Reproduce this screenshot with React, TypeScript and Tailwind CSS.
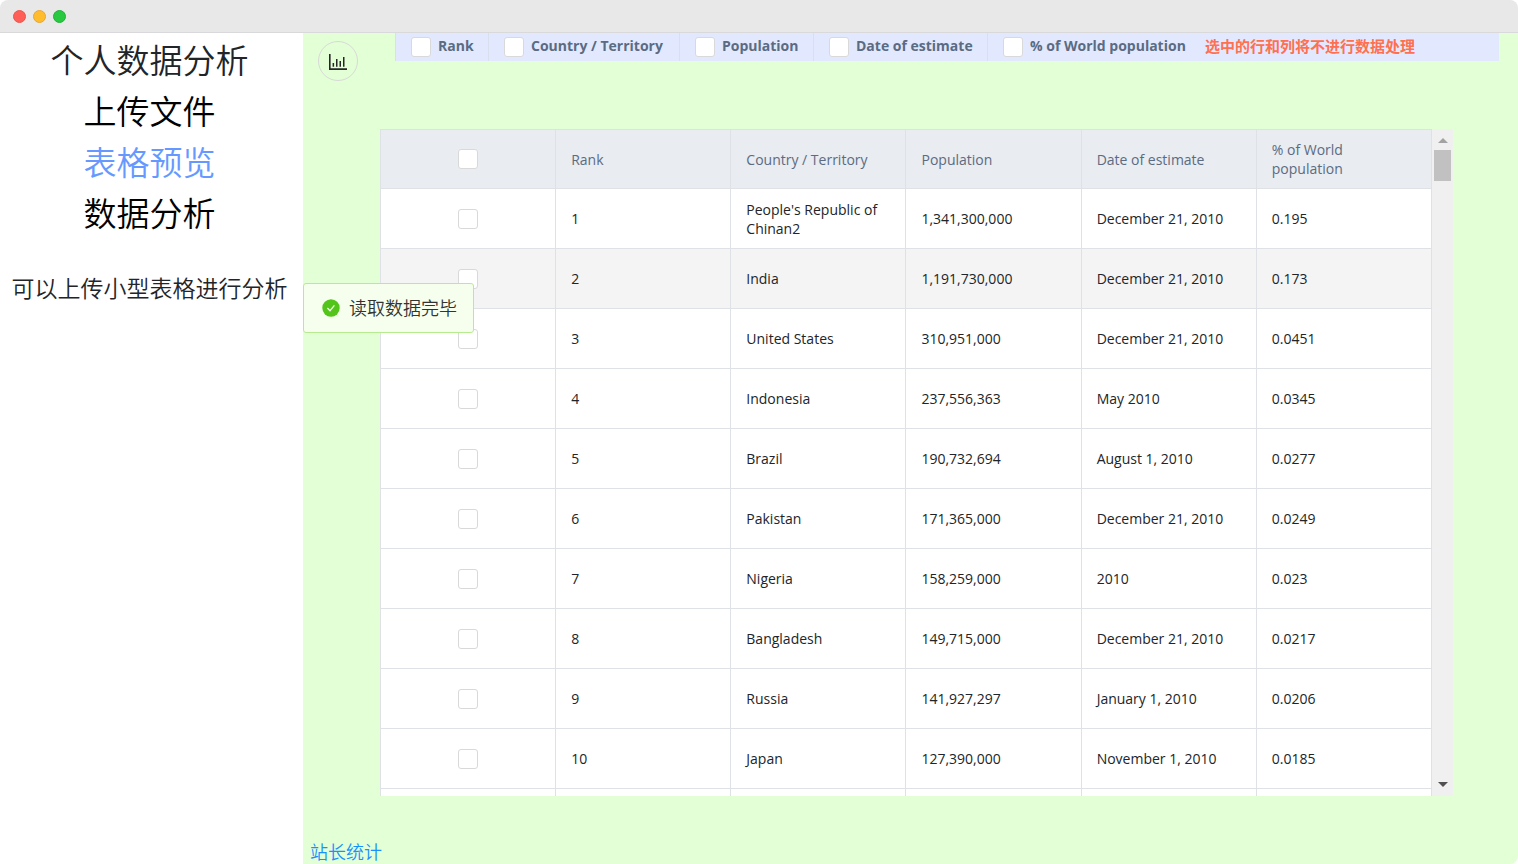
import { useState } from "react";

interface Row {
  rank: string;
  country: string;
  population: string;
  date: string;
  share: string;
}

const rows: Row[] = [
  { rank: "1", country: "People's Republic of Chinan2", population: "1,341,300,000", date: "December 21, 2010", share: "0.195" },
  { rank: "2", country: "India", population: "1,191,730,000", date: "December 21, 2010", share: "0.173" },
  { rank: "3", country: "United States", population: "310,951,000", date: "December 21, 2010", share: "0.0451" },
  { rank: "4", country: "Indonesia", population: "237,556,363", date: "May 2010", share: "0.0345" },
  { rank: "5", country: "Brazil", population: "190,732,694", date: "August 1, 2010", share: "0.0277" },
  { rank: "6", country: "Pakistan", population: "171,365,000", date: "December 21, 2010", share: "0.0249" },
  { rank: "7", country: "Nigeria", population: "158,259,000", date: "2010", share: "0.023" },
  { rank: "8", country: "Bangladesh", population: "149,715,000", date: "December 21, 2010", share: "0.0217" },
  { rank: "9", country: "Russia", population: "141,927,297", date: "January 1, 2010", share: "0.0206" },
  { rank: "10", country: "Japan", population: "127,390,000", date: "November 1, 2010", share: "0.0185" },
];

const columns = [
  { name: "Rank", width: "w-[93px]" },
  { name: "Country / Territory", width: "w-[191px]" },
  { name: "Population", width: "w-[134px]" },
  { name: "Date of estimate", width: "w-[174px]" },
  { name: "% of World population", width: "w-[218px]" },
];

const menu = ["上传文件", "表格预览", "数据分析"];

const cell = "border border-[#dee2e6] px-[15px] leading-[19px]";

function Checkbox({ id, label }: { id?: string; label?: string }) {
  return (
    <input
      id={id}
      type="checkbox"
      aria-label={label}
      className="block size-5 shrink-0 appearance-none rounded-[3px] border border-[#d9d9d9] bg-white checked:bg-[#1890ff]"
    />
  );
}

function TitleBar() {
  return (
    <header className="flex h-[33px] shrink-0 items-center gap-[7px] rounded-t-lg border-b border-[#d9d9dc] bg-[#e8e8e8] px-[13px]">
      <span className="size-[13px] rounded-full border border-[#e9564f] bg-[#ff5f57]" />
      <span className="size-[13px] rounded-full border border-[#e5a63a] bg-[#ffbd2e]" />
      <span className="size-[13px] rounded-full border border-[#20b038] bg-[#28c940]" />
    </header>
  );
}

function Sidebar() {
  const [active, setActive] = useState("表格预览");

  return (
    <aside className="w-[303px] shrink-0 bg-white pt-[2px] pr-1 text-center font-[350]">
      <h1 className="text-[33px] leading-[51px] text-[#212529]">个人数据分析</h1>
      <nav className="flex flex-col items-center">
        {menu.map((item) => (
          <button
            key={item}
            onClick={() => setActive(item)}
            className={`text-[33px] leading-[51px] ${item === active ? "text-[#6699ff]" : "text-black"}`}
          >
            {item}
          </button>
        ))}
      </nav>
      <p className="mt-8 text-[23px] leading-[35px] whitespace-nowrap text-[#212529]">
        可以上传小型表格进行分析
      </p>
    </aside>
  );
}

function ColumnBar() {
  return (
    <div className="mr-[19px] flex h-7 flex-1 items-center bg-[#e2e9ff]">
      {columns.map((col, i) => (
        <label
          key={col.name}
          className={`flex h-full shrink-0 items-center border-l border-[#d8dfee] pl-[15px] text-sm font-bold whitespace-nowrap text-[#5b6b82] ${col.width}`}
        >
          <Checkbox id={`column-${i}`} />
          <span className="pb-[2px] pl-[7px]">{col.name}</span>
        </label>
      ))}
      <strong className="pb-[2px] text-[15px] font-bold whitespace-nowrap text-[#ff7050]">
        选中的行和列将不进行数据处理
      </strong>
    </div>
  );
}

function DataTable() {
  return (
    <div className="mr-[65px] ml-[77px] flex min-h-0 flex-1">
      <div className="flex-1 overflow-hidden">
        <table className="w-full table-fixed border-collapse bg-white text-sm text-[#212529]">
          <thead>
            <tr className="h-[59px] bg-[#e9ecf1] text-left text-[#5b6b82]">
              <th className={`${cell} font-normal`}>
                <div className="flex justify-center">
                  <Checkbox label="Select all rows" />
                </div>
              </th>
              {columns.map((col) => (
                <th key={col.name} className={`${cell} font-normal`}>
                  {col.name}
                </th>
              ))}
            </tr>
          </thead>
          <tbody>
            {rows.map((row) => (
              <tr key={row.rank} className={`h-15 ${row.rank === "2" ? "bg-[#f4f4f4]" : ""}`}>
                <td className={cell}>
                  <div className="flex justify-center">
                    <Checkbox label={`Select row ${row.rank}`} />
                  </div>
                </td>
                <td className={cell}>{row.rank}</td>
                <td className={cell}>{row.country}</td>
                <td className={cell}>{row.population}</td>
                <td className={cell}>{row.date}</td>
                <td className={cell}>{row.share}</td>
              </tr>
            ))}
            <tr className="h-15">
              <td className={cell} />
              {columns.map((col) => (
                <td key={col.name} className={cell} />
              ))}
            </tr>
          </tbody>
        </table>
      </div>
      {/* Scrollbar */}
      <div className="flex w-[21px] shrink-0 flex-col items-center bg-[#f0f0f0] pt-[9px] pb-[9px]">
        <svg width="10" height="5" viewBox="0 0 10 5" fill="#a3a3a3">
          <path d="M0 5 5 0l5 5z" />
        </svg>
        <div className="mt-[7px] h-[31px] w-[17px] bg-[#c1c1c1]" />
        <svg className="mt-auto" width="10" height="5" viewBox="0 0 10 5" fill="#505050">
          <path d="M0 0h10L5 5z" />
        </svg>
      </div>
    </div>
  );
}

function Toast() {
  return (
    <div
      role="status"
      className="absolute top-[250px] left-0 flex h-[50px] items-center gap-[9px] rounded-[3px] border border-[#b7eb8f] bg-[#f6ffed] pr-4 pl-[18px] text-lg font-[350] whitespace-nowrap text-[#333333]"
    >
      <svg width="18" height="18" viewBox="0 0 18 18">
        <circle cx="9" cy="9" r="8.7" fill="#52c41a" />
        <path d="m5.4 9 2.6 2.7 4.4-5.3" fill="none" stroke="#f6ffed" strokeWidth="1.3" />
      </svg>
      读取数据完毕
    </div>
  );
}

export default function App() {
  return (
    <div className="flex h-screen flex-col overflow-hidden bg-white font-['Open_Sans','Noto_Sans_CJK_SC',sans-serif]">
      <TitleBar />
      <div className="flex min-h-0 flex-1">
        <Sidebar />
        <main className="relative flex min-w-0 flex-1 flex-col rounded-br-lg bg-[#e3ffd6]">
          <div className="flex h-24 shrink-0">
            <button
              aria-label="Chart"
              className="mt-2 mr-[37px] ml-[15px] flex size-10 items-center justify-center rounded-full border border-[#d9d9d9] text-[#262626]"
            >
              <svg width="18" height="18" viewBox="0 0 18 18" fill="currentColor">
                <path d="M0 2h1.6v14.2H18V18H0zM3.6 11h1.5v3.8H3.6zM7 7h1.5v7.8H7zM10.5 9H12v5.800h-1.5zM14 5h1.5v9.800H14z" />
              </svg>
            </button>
            <ColumnBar />
          </div>
          <DataTable />
          <footer className="flex h-[68px] shrink-0 items-end px-[7px] text-lg leading-6 font-[350]">
            <a href="#" className="text-[#1890ff]">
              站长统计
            </a>
          </footer>
          <Toast />
        </main>
      </div>
    </div>
  );
}
